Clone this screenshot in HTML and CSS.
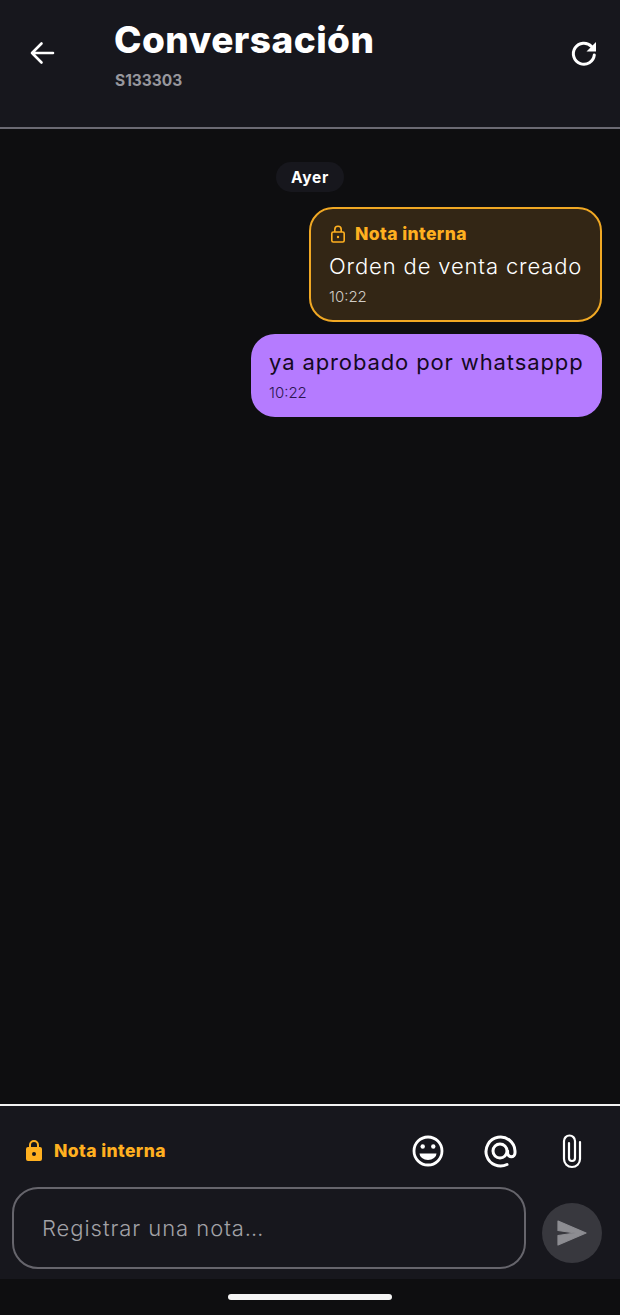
FILE: index.html
```html
<!DOCTYPE html>
<html lang="es">
<head>
<meta charset="utf-8">
<title>Conversación</title>
<link rel="stylesheet" href="styles.css">
</head>
<body>
<div class="app">
  <header class="topbar">
    <button class="icon-btn back" aria-label="Volver">
      <svg width="28" height="28" viewBox="0 0 28 28" fill="none" stroke="#fff" stroke-width="2.600" stroke-linecap="round" stroke-linejoin="round"><path d="M25 14H4M13.500 4.500L4 14l9.500 9.500"/></svg>
    </button>
    <div class="titles">
      <h1 class="title">Conversación</h1>
      <div class="subtitle">S133303</div>
    </div>
    <button class="icon-btn refresh" aria-label="Recargar">
      <svg width="28" height="28" viewBox="0 0 28 28" fill="none"><path d="M21.500 7.500A10.500 10.500 0 1 0 24.300 16" stroke="#fff" stroke-width="3" stroke-linecap="round"/><path d="M26 3V12.500H16.500Z" fill="#fff"/></svg>
    </button>
  </header>
  <main class="chat">
    <div class="day"><span class="day-pill">Ayer</span></div>
    <div class="bubble note">
      <div class="note-head">
        <svg width="18" height="18" viewBox="0 0 18 18" fill="none" stroke="#ffb020" stroke-width="1.600"><rect x="2.800" y="7" width="12.400" height="10" rx="1.500"/><path d="M5.800 7V4.500a3.200 3.200 0 0 1 6.400 0V7"/><circle cx="9" cy="12" r="1.200" fill="#ffb020" stroke="none"/></svg>
        <span>Nota interna</span>
      </div>
      <div class="msg">Orden de venta creado</div>
      <div class="time">10:22</div>
    </div>
    <div class="bubble mine">
      <div class="msg">ya aprobado por whatsappp</div>
      <div class="time">10:22</div>
    </div>
  </main>
  <footer class="composer">
    <div class="tools">
      <div class="note-toggle">
        <svg width="24" height="24" viewBox="0 0 24 24" fill="#ffb020"><path d="M18 8h-1V6a5 5 0 0 0-10 0v2H6a2 2 0 0 0-2 2v10a2 2 0 0 0 2 2h12a2 2 0 0 0 2-2V10a2 2 0 0 0-2-2zM9 6a3 3 0 0 1 6 0v2H9V6z"/><circle cx="12" cy="15" r="2" fill="#17171d"/></svg>
        <span>Nota interna</span>
      </div>
      <div class="tool-icons">
        <svg width="36" height="36" viewBox="0 0 36 36" fill="none"><circle cx="18" cy="18" r="14" stroke="#fff" stroke-width="2.800"/><circle cx="12.700" cy="13.500" r="2.200" fill="#fff"/><circle cx="23.300" cy="13.500" r="2.200" fill="#fff"/><path d="M9.500 20.500h17a8.500 6.500 0 0 1-17 0z" fill="#fff"/></svg>
        <svg width="36" height="36" viewBox="0 0 36 36" fill="none" stroke="#fff" stroke-width="3" stroke-linecap="round"><path d="M25 31.500a14.500 14.500 0 1 1 8-13.500v2a3.700 3.700 0 0 1-7.400 0v-2"/><circle cx="18" cy="18" r="7"/></svg>
        <svg width="36" height="36" viewBox="0 0 36 36" fill="none" stroke="#fff" stroke-width="2.200" stroke-linecap="round"><path d="M26 9v17a8 8 0 0 1-16 0V8a5.500 5.500 0 0 1 11 0v17a3 3 0 0 1-6 0V10"/></svg>
      </div>
    </div>
    <div class="input-row">
      <div class="input">Registrar una nota…</div>
      <button class="send" aria-label="Enviar">
        <svg width="32" height="28" viewBox="0 0 32 28"><path d="M2 2L30 14 2 26V16.500L19 14 2 11.500Z" fill="#8d8d92" stroke="#8d8d92" stroke-width="1.200" stroke-linejoin="round"/></svg>
      </button>
    </div>
  </footer>
  <div class="navbar"><span class="home"></span></div>
</div>
</body>
</html>
```
FILE: styles.css
```css
* { box-sizing: border-box; }
html, body { margin: 0; padding: 0; }
body { background: #0e0e10; font-family: "Inter", "Noto Sans", sans-serif; color: #fff; }
.app { width: 620px; height: 1315px; display: flex; flex-direction: column; overflow: hidden; }
.topbar { height: 129px; flex: none; background: #17171d; border-bottom: 2px solid #6b6a73; display: flex; align-items: flex-start; padding: 0 22px 0 28px; }
.icon-btn { background: none; border: 0; padding: 0; width: 28px; height: 28px; margin-top: 39px; }
.titles { flex: 1; padding: 17px 0 0 59px; }
.title { margin: 0; font-size: 37px; line-height: 46px; font-weight: 800; letter-spacing: 0.45px; margin-left: -1px; }
.subtitle { margin-top: 7px; font-size: 15.500px; line-height: 22px; font-weight: 700; color: #97979d; }
.chat { flex: 1; display: flex; flex-direction: column; align-items: flex-end; padding: 33px 18px 0; }
.day { align-self: center; height: 30px; margin-bottom: 15px; }
.day-pill { display: block; height: 30px; padding: 0 15px; border-radius: 15px; background: #17171d; font-size: 15.500px; font-weight: 700; line-height: 31px; letter-spacing: 0.7px; }
.bubble { border-radius: 24px; }
.note { width: 293px; height: 115px; padding: 13.500px 18px 0; background: #332615; border: 2px solid #f0a824; margin-bottom: 12px; }
.note-head { display: flex; align-items: center; gap: 8px; height: 22px; color: #ffb020; font-size: 17.500px; font-weight: 800; letter-spacing: 0.4px; }
.msg { font-size: 22px; line-height: 30px; white-space: nowrap; }
.note .msg { margin-top: 6.500px; font-weight: 300; letter-spacing: 0.86px; }
.time { font-size: 15px; line-height: 20px; margin-top: 6px; color: #d0ccc5; font-weight: 300; }
.mine { width: 351px; height: 83px; padding: 13px 18px 0; background: #b57bff; color: #14091f; }
.mine .msg { font-weight: 400; letter-spacing: 0.88px; }
.mine .time { color: #2c1650; }
.composer { flex: none; height: 175px; background: #17171d; border-top: 2px solid #f2f2f2; padding: 0 18px 0 12px; }
.tools { display: flex; align-items: center; justify-content: space-between; height: 81px; padding: 8px 12px 0 0; }
.note-toggle { display: flex; align-items: center; gap: 8px; padding-left: 10px; color: #ffb020; font-size: 17.500px; font-weight: 800; letter-spacing: 0.4px; }
.tool-icons { display: flex; gap: 36px; }
.input-row { display: flex; align-items: flex-start; gap: 16px; }
.input { width: 514px; height: 82px; border: 2px solid #66656c; border-radius: 26px; padding-left: 28px; font-size: 22px; font-weight: 300; line-height: 78px; color: #a2a2a7; letter-spacing: 0.95px; }
.send { width: 60px; height: 60px; margin-top: 16px; border: 0; padding: 0; border-radius: 50%; background: #38383e; display: flex; align-items: center; justify-content: center; }
.navbar { flex: none; height: 36px; background: #0e0e10; display: flex; justify-content: center; padding-top: 15px; }
.home { width: 164px; height: 6px; border-radius: 3px; background: #f5f5f5; }
```
